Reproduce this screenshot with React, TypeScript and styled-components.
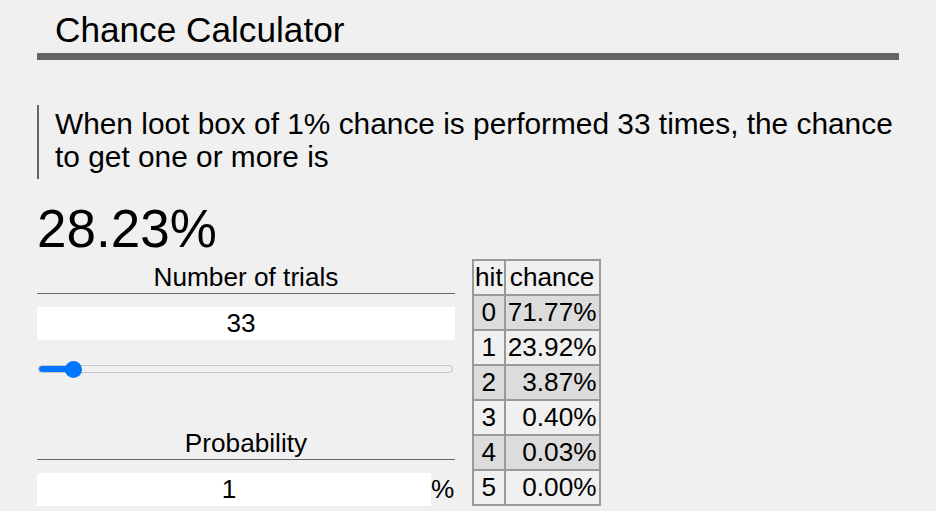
import React from "react";
import styled, { createGlobalStyle } from "styled-components";

const Global = createGlobalStyle`
  html, body {
    margin: 0;
    padding: 0;
    background: #f0f0f0;
  }
  body {
    font-family: "Liberation Sans", Arial, sans-serif;
    color: #000;
  }
`;

const Page = styled.div`
  margin: 0 37px;
  width: 862px;
`;

const Title = styled.h1`
  margin: 0;
  padding: 11px 18px 5px;
  font-size: 35.2px;
  font-weight: normal;
  line-height: 37px;
  border-bottom: 7px solid #666;
`;

const Quote = styled.blockquote`
  margin: 45px 0 0;
  padding: 2px 0 6px 16px;
  border-left: 2px solid #666;
  font-size: 29.85px;
  line-height: 33px;
`;

const Result = styled.div`
  margin-top: 20px;
  font-size: 53px;
  line-height: 60px;
`;

const Row = styled.div`
  display: flex;
  align-items: flex-start;
  gap: 17px;
`;

const Controls = styled.div`
  width: 418px;
  display: flex;
  flex-direction: column;
`;

const Label = styled.div<{ $top: number }>`
  margin-top: ${(p) => p.$top}px;
  font-size: 26.2px;
  line-height: 30px;
  text-align: center;
  border-bottom: 1px solid #666;
  padding-bottom: 1px;
`;

const InputRow = styled.div`
  display: flex;
  align-items: center;
  margin-top: 13px;
`;

const NumberInput = styled.input<{ $width: number }>`
  box-sizing: border-box;
  width: ${(p) => p.$width}px;
  height: 33px;
  border: none;
  background: #fff;
  font-family: "Liberation Sans", Arial, sans-serif;
  font-size: 26.2px;
  text-align: center;
  padding: 0 10px 0 0;
  outline: none;
  color: #000;
`;

const Unit = styled.span`
  font-size: 26.2px;
`;

const Slider = styled.input<{ $fill: number }>`
  -webkit-appearance: none;
  appearance: none;
  display: block;
  width: 415px;
  height: 18px;
  margin: 20px 0 0 1px;
  padding: 0;
  background: transparent;

  &::-webkit-slider-runnable-track {
    box-sizing: border-box;
    height: 8px;
    border-radius: 4px;
    border: 1px solid #c6c6c6;
    background: linear-gradient(
      to right,
      #0075ff 0,
      #0075ff ${(p) => p.$fill}%,
      #efefef ${(p) => p.$fill}%
    );
  }

  &::-webkit-slider-thumb {
    -webkit-appearance: none;
    appearance: none;
    width: 17px;
    height: 17px;
    border-radius: 50%;
    background: #0075ff;
    border: none;
    margin-top: -5.5px;
  }
`;

const Table = styled.table`
  border-collapse: separate;
  border-spacing: 0;
  border: 1px solid #999;
  font-size: 26.2px;
`;

const Cell = styled.td<{ $alt?: boolean; $align: "center" | "right" }>`
  border: 1px solid #999;
  padding: 2px;
  line-height: 29px;
  text-align: ${(p) => p.$align};
  background: ${(p) => (p.$alt ? "#dcdcdc" : "transparent")};
`;

const Head = styled.th`
  border: 1px solid #999;
  padding: 2px 1px;
  line-height: 29px;
  font-weight: normal;
`;

const rows = [
  ["0", "71.77%"],
  ["1", "23.92%"],
  ["2", "3.87%"],
  ["3", "0.40%"],
  ["4", "0.03%"],
  ["5", "0.00%"],
];

const trials = 33;
const maxTrials = 500;

export default function App() {
  const frac = trials / maxTrials;
  const fill = ((9.5 + frac * 396) / 415) * 100;
  return (
    <>
      <Global />
      <Page>
        <Title>Chance Calculator</Title>
        <Quote>
          When loot box of 1% chance is performed 33 times, the chance to get
          one or more is
        </Quote>
        <Result>28.23%</Result>
        <Row>
          <Controls>
            <Label $top={3}>Number of trials</Label>
            <InputRow>
              <NumberInput $width={420} type="text" defaultValue="33" />
            </InputRow>
            <Slider
              type="range"
              min={0}
              max={maxTrials}
              defaultValue={trials}
              $fill={fill}
            />
            <Label $top={50}>Probability</Label>
            <InputRow>
              <NumberInput $width={394} type="text" defaultValue="1" />
              <Unit>%</Unit>
            </InputRow>
          </Controls>
          <Table>
            <thead>
              <tr>
                <Head>hit</Head>
                <Head>chance</Head>
              </tr>
            </thead>
            <tbody>
              {rows.map(([h, c], i) => (
                <tr key={h}>
                  <Cell $alt={i % 2 === 0} $align="center">
                    {h}
                  </Cell>
                  <Cell $alt={i % 2 === 0} $align="right">
                    {c}
                  </Cell>
                </tr>
              ))}
            </tbody>
          </Table>
        </Row>
      </Page>
    </>
  );
}
